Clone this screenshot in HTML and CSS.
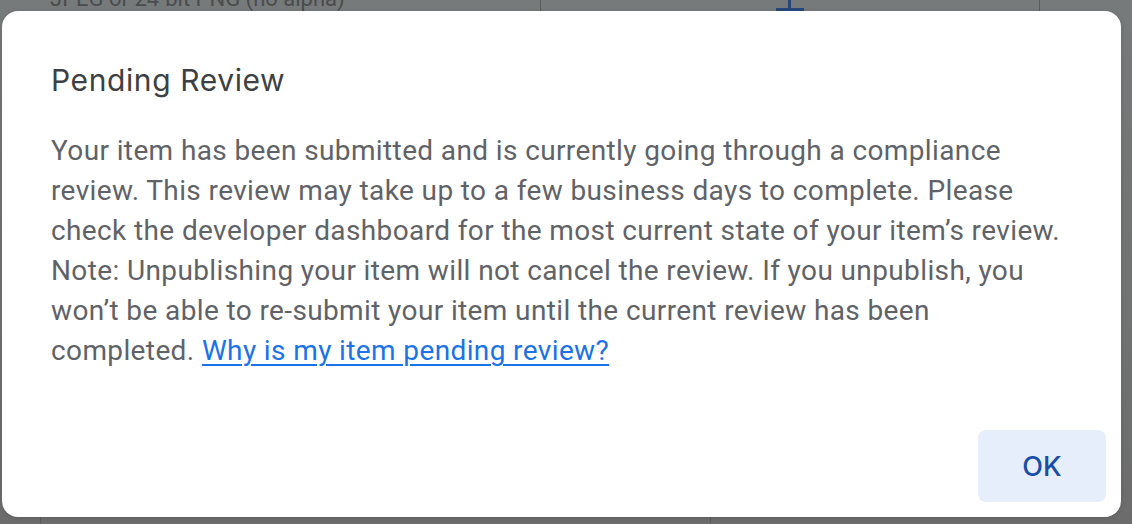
FILE: index.html
```html
<!DOCTYPE html>
<html lang="en">
<head>
<meta charset="utf-8">
<title>Pending Review</title>
<link rel="stylesheet" href="styles.css">
</head>
<body>
<div class="backdrop">
  <div class="bg-text">JPEG or 24-bit PNG (no alpha)</div>
  <div class="bg-plus"><span class="plus-v"></span><span class="plus-h"></span></div>
  <span class="bg-line l1"></span>
  <span class="bg-line l2"></span>
  <span class="bg-line l3"></span>
  <span class="bg-line l4"></span>
</div>
<div class="dialog" role="dialog" aria-labelledby="dlg-title">
  <h2 class="dialog-title" id="dlg-title">Pending Review</h2>
  <p class="dialog-body">Your item has been submitted and is currently going through a compliance review. This review may take up to a few business days to complete. Please check the developer dashboard for the most current state of your item’s review. Note: Unpublishing your item will not cancel the review. If you unpublish, you won’t be able to re-submit your item until the current review has been completed. <a class="dialog-link" href="#">Why is my item pending review?</a></p>
  <div class="dialog-actions">
    <button class="btn-ok" type="button">OK</button>
  </div>
</div>
</body>
</html>
```
FILE: styles.css
```css
html, body {
  margin: 0;
  padding: 0;
}
body {
  width: 1132px;
  height: 524px;
  overflow: hidden;
  position: relative;
  background: linear-gradient(#777a7a, #6c6c6c);
  font-family: Roboto, "Liberation Sans", sans-serif;
}
.backdrop {
  position: absolute;
  inset: 0;
}
.bg-text {
  position: absolute;
  left: 50px;
  top: -14px;
  font-size: 22px;
  line-height: 26px;
  color: #4a4c4d;
  font-family: Roboto, sans-serif;
}
.bg-plus {
  position: absolute;
  left: 776px;
  top: 0;
  width: 28px;
  height: 11px;
}
.plus-v {
  position: absolute;
  left: 12px;
  top: 0;
  width: 3px;
  height: 9px;
  background: #26477a;
}
.plus-h {
  position: absolute;
  left: 0;
  top: 8px;
  width: 28px;
  height: 3px;
  background: #26477a;
}
.bg-line {
  position: absolute;
  width: 1px;
  background: #5a5c5c;
}
.l1 { left: 540px; top: 0; height: 12px; }
.l2 { left: 1039px; top: 0; height: 12px; }
.l3 { left: 40px; top: 516px; height: 8px; }
.l4 { left: 710px; top: 516px; height: 8px; }

.dialog {
  position: absolute;
  left: 2px;
  top: 11px;
  width: 1119px;
  height: 506px;
  box-sizing: border-box;
  background: #ffffff;
  border-radius: 16px;
  padding: 51px 15px 15px 49px;
  display: flex;
  flex-direction: column;
  box-shadow: 0 1px 4px rgba(0,0,0,0.15);
}
.dialog-title {
  margin: 0;
  font-family: Inter, "Open Sans", sans-serif;
  font-weight: 400;
  font-size: 30px;
  line-height: 36px;
  color: #3c4043;
  letter-spacing: 0.6px;
}
.dialog-body {
  margin: 33px 0 0 0;
  max-width: 1013px;
  font-family: Roboto, "Liberation Sans", sans-serif;
  font-size: 28px;
  letter-spacing: 0.38px;
  line-height: 40px;
  color: #5f6368;
}
.dialog-link {
  color: #1a73e8;
  text-decoration: underline;
  text-underline-offset: 4px;
  text-decoration-thickness: 2px;
}
.dialog-actions {
  margin-top: auto;
  display: flex;
  justify-content: flex-end;
}
.btn-ok {
  width: 128px;
  height: 72px;
  border: 0;
  border-radius: 8px;
  background: #e6eefc;
  color: #1a4ea6;
  font-family: Inter, "Open Sans", sans-serif;
  font-weight: 500;
  font-size: 27px;
  padding: 0;
  cursor: pointer;
}
```
